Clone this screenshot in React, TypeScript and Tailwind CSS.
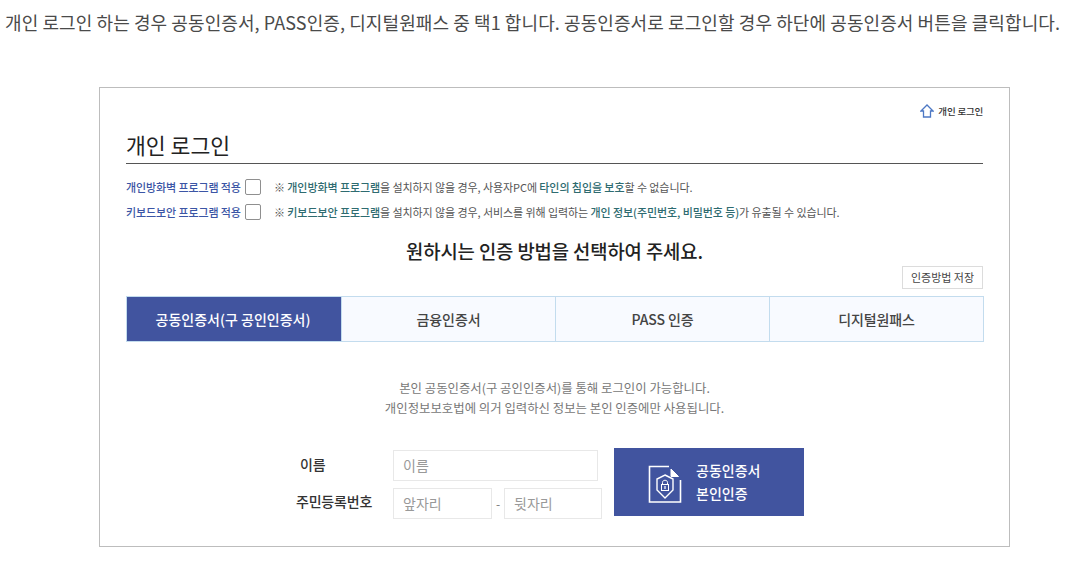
const font = "font-['Noto_Sans_CJK_KR','Noto_Sans',sans-serif]";

const tabs = ["공동인증서(구 공인인증서)", "금융인증서", "PASS 인증", "디지털원패스"];

function Em({ children }: { children: React.ReactNode }) {
  return <span className="font-medium text-[#2e6b70]">{children}</span>;
}

function OptionRow({ label, children }: { label: string; children: React.ReactNode }) {
  return (
    <div className="flex items-center h-[24px]">
      <span className="w-[119px] text-[11px] font-medium text-[#3b55a5] tracking-[-0.11px] whitespace-nowrap">{label}</span>
      <span className="w-[16px] h-[16px] border border-[#8f8f8f] rounded-[2px] bg-white" />
      <span className="ml-[13px] text-[11px] text-[#555] tracking-[-0.08px] whitespace-nowrap">{children}</span>
    </div>
  );
}

function CertIcon() {
  return (
    <svg width="34" height="38" viewBox="0 0 34 38" fill="none" stroke="white" strokeWidth="1.6">
      <path d="M21 1.5H1.5V37H32.5V15" />
      <path d="M23 4 L30.5 11.5 H23 Z" fill="white" strokeWidth="1" />
      <path d="M17 10 L25 14 V25 L17 33 L9 25 V14 Z" strokeWidth="1.4" />
      <path d="M14.5 19.5 V17.5 C14.5 14.5 19.5 14.5 19.5 17.5 V19.5" strokeWidth="1" />
      <rect x="13.5" y="19.5" width="7" height="6" strokeWidth="1" />
      <rect x="16.4" y="21" width="1.2" height="3" fill="white" stroke="none" />
    </svg>
  );
}

export default function App() {
  return (
    <div className={`${font} w-[1066px] h-[564px] bg-white overflow-hidden`}>
      <p className="pt-[9px] pl-[5px] text-[18px] leading-[26px] text-[#4a4a4a] tracking-[0.09px] whitespace-nowrap">
        개인 로그인 하는 경우 공동인증서, PASS인증, 디지털원패스 중 택1 합니다. 공동인증서로 로그인할 경우 하단에 공동인증서 버튼을 클릭합니다.
      </p>

      <div className="mt-[52px] ml-[99px] w-[911px] h-[460px] border border-[#bdbdbd] px-[26px] bg-white">
        <div className="flex justify-end items-center gap-[4px] pt-[15px] h-[31px] text-[9.5px] font-medium text-[#333]">
          <svg width="14" height="14" viewBox="0 0 14 14" fill="none" stroke="#4d78c4" strokeWidth="1.3">
            <path d="M1 7 L7 1 L13 7 H10.5 V13 H3.5 V7 Z" />
          </svg>
          <span className="tracking-[-0.2px]">개인 로그인</span>
        </div>

        <h1 className="mt-[10px] h-[35px] text-[21.6px] leading-[32px] font-normal text-[#222] border-b border-[#555]">개인 로그인</h1>

        <div className="mt-[11px]">
          <OptionRow label="개인방화벽 프로그램 적용">
            ※ <Em>개인방화벽 프로그램</Em>을 설치하지 않을 경우, 사용자PC에 <Em>타인의 침입을 보호</Em>할 수 없습니다.
          </OptionRow>
          <div className="h-[1px]" />
          <OptionRow label="키보드보안 프로그램 적용">
            ※ <Em>키보드보안 프로그램</Em>을 설치하지 않을 경우, 서비스를 위해 입력하는 <Em>개인 정보(주민번호, 비밀번호 등)</Em>가 유출될 수 있습니다.
          </OptionRow>
        </div>

        <h2 className="mt-[13px] text-center text-[18.8px] leading-[28px] font-medium text-[#222] tracking-[-0.1px]">원하시는 인증 방법을 선택하여 주세요.</h2>

        <div className="mt-[1px] flex justify-end">
          <span className="w-[81px] h-[23px] border border-[#dcdcdc] text-[11px] leading-[21px] text-center text-[#444]">인증방법 저장</span>
        </div>

        <div className="mt-[7px] grid grid-cols-4 w-[858px] h-[46px] border border-[#c3dcee] bg-[#f8faff]">
          {tabs.map((t, i) => (
            <div
              key={t}
              className={
                i === 0
                  ? "flex items-center justify-center bg-[#41549f] text-white text-[14px] font-medium pr-[2px]"
                  : "flex items-center justify-center border-l border-[#c3dcee] text-[#444] text-[14px] font-medium tracking-[-0.1px]"
              }
            >
              {t}
            </div>
          ))}
        </div>

        <div className="mt-[36px] text-center text-[12.4px] leading-[20px] text-[#777]">
          <p>본인 공동인증서(구 공인인증서)를 통해 로그인이 가능합니다.</p>
          <p>개인정보보호법에 의거 입력하신 정보는 본인 인증에만 사용됩니다.</p>
        </div>

        <div className="mt-[30px] flex">
          <div className="ml-[166px] w-[101px] text-[14px] font-medium text-[#333] tracking-[-0.2px]">
            <div className="h-[37px] leading-[32px] pl-[8px]">이름</div>
            <div className="h-[32px] leading-[32px] pl-[4px] whitespace-nowrap">주민등록번호</div>
          </div>
          <div className="w-[210px] mt-[2px] text-[14px] text-[#999]">
            <div className="w-[205px] h-[31px] border border-[#e8e8e8] pl-[9px] leading-[28px]">이름</div>
            <div className="mt-[7px] flex items-center">
              <div className="w-[99px] h-[31px] border border-[#e8e8e8] pl-[9px] leading-[28px]">앞자리</div>
              <span className="w-[12px] text-center text-[12px] text-[#777]">-</span>
              <div className="w-[98px] h-[31px] border border-[#e8e8e8] pl-[9px] leading-[28px]">뒷자리</div>
            </div>
          </div>
          <div className="ml-[11px] w-[190px] h-[68px] bg-[#41549f] flex items-center text-white">
            <div className="ml-[34px] mt-[3px]"><CertIcon /></div>
            <div className="ml-[14px] text-[14px] font-medium leading-[23px]">
              공동인증서<br />본인인증
            </div>
          </div>
        </div>
      </div>
    </div>
  );
}
